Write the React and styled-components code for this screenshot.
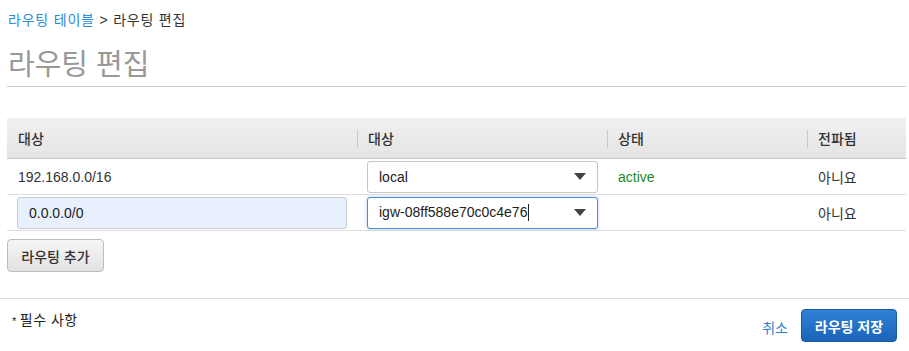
import React from "react";
import styled, { createGlobalStyle } from "styled-components";

const Global = createGlobalStyle`
  body {
    margin: 0;
    background: #fff;
    font-family: "Liberation Sans", "Noto Sans CJK KR", sans-serif;
    font-size: 14px;
    color: #333;
  }
`;

const Page = styled.div`
  width: 909px;
  height: 351px;
  overflow: hidden;
  display: flex;
  flex-direction: column;
`;

const Main = styled.div`
  padding: 0 3px 0 7px;
`;

const Crumbs = styled.div`
  margin-top: 11px;
  padding-left: 1px;
  line-height: 18px;
  letter-spacing: 0.8px;
  color: #333;
  a {
    color: #2d8bd8;
    text-decoration: none;
  }
`;

const Title = styled.h1`
  margin: 19px 0 0;
  padding: 0 0 4px 1px;
  font-size: 29px;
  font-weight: normal;
  line-height: 34px;
  color: #999;
  border-bottom: 1px solid #ccc;
`;

const Table = styled.div`
  margin-top: 31px;
  display: grid;
  grid-template-columns: 350px 250px 200px 1fr;
`;

const Head = styled.div`
  height: 40px;
  display: flex;
  align-items: center;
  padding-left: 11px;
  position: relative;
  font-weight: 500;
  color: #333;
  background: linear-gradient(#f1f1f1, #e4e4e4);
  border-bottom: 1px solid #c8c8c8;
  &::before {
    content: "";
    display: ${(p) => (p.$sep ? "block" : "none")};
    position: absolute;
    left: 0;
    top: 12px;
    height: 18px;
    border-left: 1px solid #c9c9c9;
  }
`;

const Cell = styled.div`
  height: 35px;
  display: flex;
  align-items: center;
  padding-left: ${(p) => p.$pad || 11}px;
  border-bottom: 1px solid #ddd;
  color: ${(p) => p.$color || "#333"};
`;

const TextInput = styled.input`
  box-sizing: border-box;
  width: 330px;
  height: 32px;
  padding: 0 11px;
  font: inherit;
  color: #222;
  background: #e8f0fd;
  border: 1px solid #c8ccd2;
  border-radius: 3px;
  outline: none;
`;

const Select = styled.div`
  box-sizing: border-box;
  width: 231px;
  height: 32px;
  padding: 0 11px;
  display: flex;
  align-items: center;
  justify-content: space-between;
  background: #fff;
  border: 1px solid ${(p) => (p.$focus ? "#4a90d9" : "#c6c6c6")};
  box-shadow: ${(p) => (p.$focus ? "0 0 3px rgba(74,144,217,0.5)" : "none")};
  border-radius: 3px;
  color: #222;
`;

const Caret = styled.span`
  width: 0;
  height: 0;
  border-left: 6px solid transparent;
  border-right: 6px solid transparent;
  border-top: 7px solid #444;
`;

const Cursor = styled.span`
  display: inline-block;
  width: 1px;
  height: 17px;
  background: #222;
  vertical-align: middle;
  margin-left: 1px;
`;

const AddButton = styled.button`
  margin-top: 8px;
  height: 33px;
  width: 97px;
  font: inherit;
  font-weight: 500;
  color: #333;
  background: linear-gradient(#f6f6f6, #e2e2e2);
  border: 1px solid #bdbdbd;
  border-radius: 4px;
`;

const Footer = styled.div`
  margin-top: 26px;
  border-top: 1px solid #ddd;
  display: flex;
  justify-content: space-between;
  padding: 10px 12px 0 12px;
`;

const Required = styled.div`
  margin-top: 2px;
  color: #222;
  line-height: 18px;
  letter-spacing: 0.5px;
  small {
    font-size: 11px;
    margin-right: 3px;
  }
`;

const Actions = styled.div`
  display: flex;
  align-items: center;
  gap: 13px;
`;

const Cancel = styled.a`
  color: #2d7fd0;
  text-decoration: none;
  margin-top: 2px;
`;

const Primary = styled.button`
  height: 33px;
  width: 96px;
  font: inherit;
  font-weight: bold;
  color: #fff;
  background: linear-gradient(#2f82d8, #1a64b7);
  border: 1px solid #1a5aa3;
  border-radius: 4px;
`;

export default function App() {
  return (
    <Page>
      <Global />
      <Main>
        <Crumbs>
          <a href="#">라우팅 테이블</a> &gt; 라우팅 편집
        </Crumbs>
        <Title>라우팅 편집</Title>
        <Table>
          <Head>대상</Head>
          <Head $sep>대상</Head>
          <Head $sep>상태</Head>
          <Head $sep>전파됨</Head>

          <Cell>192.168.0.0/16</Cell>
          <Cell $pad={10}>
            <Select>
              local
              <Caret />
            </Select>
          </Cell>
          <Cell $color="#1d8a1d">active</Cell>
          <Cell>아니요</Cell>

          <Cell $pad={10}>
            <TextInput defaultValue="0.0.0.0/0" />
          </Cell>
          <Cell $pad={10}>
            <Select $focus>
              <span>
                igw-08ff588e70c0c4e76
                <Cursor />
              </span>
              <Caret />
            </Select>
          </Cell>
          <Cell />
          <Cell>아니요</Cell>
        </Table>
        <AddButton>라우팅 추가</AddButton>
      </Main>
      <Footer>
        <Required>
          <small>*</small>필수 사항
        </Required>
        <Actions>
          <Cancel href="#">취소</Cancel>
          <Primary>라우팅 저장</Primary>
        </Actions>
      </Footer>
    </Page>
  );
}
